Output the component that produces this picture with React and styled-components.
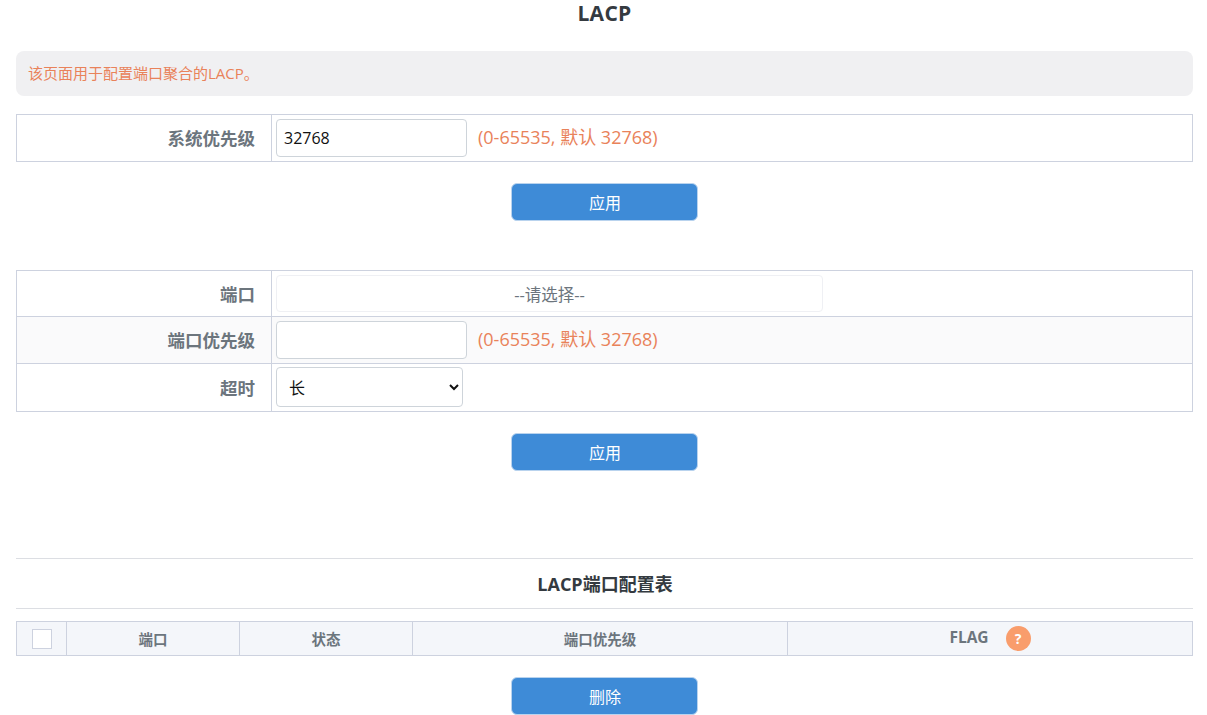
import React from 'react'
import styled, { createGlobalStyle } from 'styled-components'

const FONT = '"Open Sans", "Noto Sans CJK SC", sans-serif'

const GlobalStyle = createGlobalStyle`
    html, body {
        margin: 0;
        padding: 0;
        background: #fff;
        overflow: hidden;
    }
    body {
        font-family: ${FONT};
    }
`

const Page = styled.div`
    width: 1207px;
    height: 715px;
    box-sizing: border-box;
    padding: 0 14px 0 16px;
    overflow: hidden;
`

const Title = styled.h1`
    margin: 0;
    height: 51px;
    font-size: 21px;
    line-height: 27px;
    letter-spacing: 0.3px;
    font-weight: 700;
    color: #343a40;
    text-align: center;
    box-sizing: border-box;
`

const Notice = styled.div`
    height: 45px;
    padding: 0 12px 2px;
    box-sizing: border-box;
    display: flex;
    align-items: center;
    background: #f0f0f2;
    border-radius: 8px;
    color: #e9825a;
    font-size: 15px;
`

const FormTable = styled.div`
    margin-top: ${props => props.top}px;
    border: 1px solid #cdd2df;
    border-bottom: 0;
`

const FormRow = styled.div`
    display: grid;
    grid-template-columns: 255px 1fr;
    height: ${props => props.height}px;
    box-sizing: border-box;
    border-bottom: 1px solid #cdd2df;
    background: ${props => (props.shaded ? '#fafafb' : '#fff')};
`

const Label = styled.div`
    display: flex;
    align-items: center;
    justify-content: flex-end;
    padding: 0 16px 1px 0;
    font-size: 17.5px;
    font-weight: 700;
    color: #6c757d;
    border-right: 1px solid #cdd2df;
`

const Field = styled.div`
    display: flex;
    align-items: center;
    padding-left: 4px;
`

const TextInput = styled.input`
    width: 191px;
    height: 38px;
    box-sizing: border-box;
    padding: 0 7px;
    border: 1px solid #ced4da;
    border-radius: 4px;
    background: #fff;
    font-family: ${FONT};
    font-size: 16px;
    color: #111;
    outline: none;
`

const Hint = styled.span`
    margin-left: 11px;
    margin-top: -5px;
    font-size: 18px;
    color: #e9825a;
`

const PortPicker = styled.div`
    width: 547px;
    height: 37px;
    box-sizing: border-box;
    border: 1px solid #eff0f4;
    border-radius: 4px;
    display: flex;
    align-items: center;
    justify-content: center;
    font-size: 16.5px;
    color: #6c757d;
`

const TimeoutSelect = styled.select`
    width: 187px;
    height: 40px;
    margin-top: -2px;
    box-sizing: border-box;
    padding: 0 8px;
    border: 1px solid #ced4da;
    border-radius: 4px;
    background: #fff;
    font-family: "Noto Sans CJK JP", ${FONT};
    font-size: 16px;
    color: #111;
`

const ButtonRow = styled.div`
    margin-top: ${props => props.top}px;
    display: flex;
    justify-content: center;
    padding-right: 1px;
`

const Button = styled.button`
    width: 187px;
    height: 38px;
    padding: 0 0 0 2px;
    border: 1px solid #b9d3ee;
    border-radius: 6px;
    background: #3e8bd7;
    color: #fff;
    font-family: ${FONT};
    font-size: 16px;
`

const SectionTitle = styled.h2`
    margin: 87px 0 0;
    height: 51px;
    box-sizing: border-box;
    display: flex;
    align-items: center;
    justify-content: center;
    padding: 0 0 2px 1px;
    border-top: 1px solid #dcdee3;
    border-bottom: 1px solid #dcdee3;
    font-size: 18px;
    font-weight: 700;
    color: #343a40;
`

const ListHead = styled.div`
    margin-top: 12px;
    height: 35px;
    box-sizing: border-box;
    display: grid;
    grid-template-columns: 50px 173px 173px 375px 1fr;
    border: 1px solid #cdd2df;
    background: #f4f6fa;
`

const HeadCell = styled.div`
    display: flex;
    align-items: center;
    justify-content: center;
    gap: 17px;
    font-size: 14.5px;
    font-weight: 700;
    color: #6c757d;
    border-right: ${props => (props.last ? '0' : '1px solid #cdd2df')};
`

const FlagLabel = styled.span`
    font-size: 15.5px;
    margin-top: -3px;
`

const CheckBox = styled.span`
    width: 18px;
    height: 18px;
    border: 1px solid #cdd2df;
    background: #fff;
`

const HelpBadge = styled.span`
    width: 25px;
    height: 25px;
    border-radius: 50%;
    background: #f99d6c;
    color: #fff;
    display: flex;
    align-items: center;
    justify-content: center;
    font-size: 14px;
    font-weight: 700;
`

const HintText = '(0-65535, 默认 32768)'

const App = () => {
    return (
        <Page>
            <GlobalStyle />
            <Title>LACP</Title>
            <Notice>该页面用于配置端口聚合的LACP。</Notice>
            <FormTable top={18}>
                <FormRow height={47}>
                    <Label>系统优先级</Label>
                    <Field>
                        <TextInput defaultValue="32768" />
                        <Hint>{HintText}</Hint>
                    </Field>
                </FormRow>
            </FormTable>
            <ButtonRow top={21}>
                <Button>应用</Button>
            </ButtonRow>
            <FormTable top={49}>
                <FormRow height={46}>
                    <Label>端口</Label>
                    <Field>
                        <PortPicker>--请选择--</PortPicker>
                    </Field>
                </FormRow>
                <FormRow height={47} shaded>
                    <Label>端口优先级</Label>
                    <Field>
                        <TextInput />
                        <Hint>{HintText}</Hint>
                    </Field>
                </FormRow>
                <FormRow height={48}>
                    <Label>超时</Label>
                    <Field>
                        <TimeoutSelect defaultValue="long">
                            <option value="long">长</option>
                            <option value="short">短</option>
                        </TimeoutSelect>
                    </Field>
                </FormRow>
            </FormTable>
            <ButtonRow top={21}>
                <Button>应用</Button>
            </ButtonRow>
            <SectionTitle>LACP端口配置表</SectionTitle>
            <ListHead>
                <HeadCell>
                    <CheckBox />
                </HeadCell>
                <HeadCell>端口</HeadCell>
                <HeadCell>状态</HeadCell>
                <HeadCell>端口优先级</HeadCell>
                <HeadCell last>
                    <FlagLabel>FLAG</FlagLabel>
                    <HelpBadge>?</HelpBadge>
                </HeadCell>
            </ListHead>
            <ButtonRow top={21}>
                <Button>删除</Button>
            </ButtonRow>
        </Page>
    )
}

export default App
